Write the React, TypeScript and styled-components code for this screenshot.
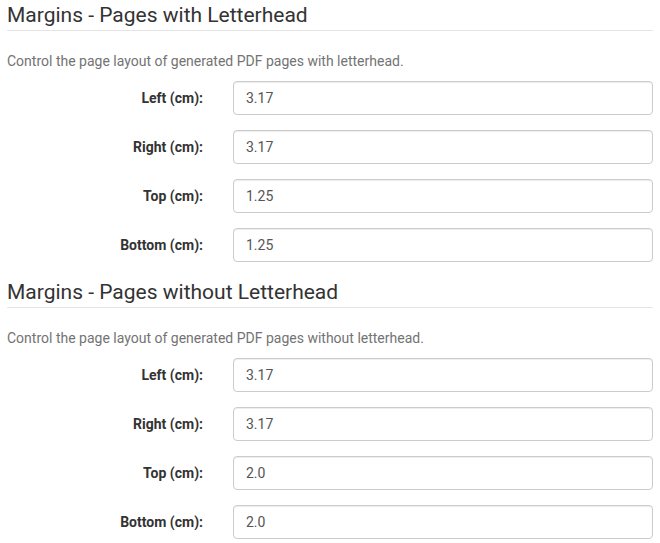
import styled, { createGlobalStyle } from "styled-components";

const GlobalStyle = createGlobalStyle`
  * {
    box-sizing: border-box;
  }

  body {
    margin: 0;
    background: #ffffff;
    font-family: Roboto, "Liberation Sans", sans-serif;
    font-size: 14px;
    line-height: 1.42857;
    color: #333333;
  }
`;

type Field = { label: string; value: string };

type Section = {
  title: string;
  description: string;
  fields: Field[];
};

const SECTIONS: Section[] = [
  {
    title: "Margins - Pages with Letterhead",
    description: "Control the page layout of generated PDF pages with letterhead.",
    fields: [
      { label: "Left (cm):", value: "3.17" },
      { label: "Right (cm):", value: "3.17" },
      { label: "Top (cm):", value: "1.25" },
      { label: "Bottom (cm):", value: "1.25" },
    ],
  },
  {
    title: "Margins - Pages without Letterhead",
    description: "Control the page layout of generated PDF pages without letterhead.",
    fields: [
      { label: "Left (cm):", value: "3.17" },
      { label: "Right (cm):", value: "3.17" },
      { label: "Top (cm):", value: "2.0" },
      { label: "Bottom (cm):", value: "2.0" },
    ],
  },
];

const App = () => {
  return (
    <>
      <GlobalStyle />
      <Page>
        {SECTIONS.map((section) => (
          <Fieldset key={section.title}>
            <Legend>{section.title}</Legend>
            <HelpText>{section.description}</HelpText>
            {section.fields.map((field) => (
              <FormGroup key={field.label}>
                <Label>{field.label}</Label>
                <Input type="text" defaultValue={field.value} />
              </FormGroup>
            ))}
          </Fieldset>
        ))}
      </Page>
    </>
  );
};

const Page = styled.main`
  padding: 0 7px;
  width: 660px;
`;

const Fieldset = styled.fieldset`
  margin: 0;
  padding: 0;
  border: 0;
  min-width: 0;
`;

const Legend = styled.legend`
  display: block;
  width: 100%;
  margin-bottom: 20px;
  padding: 0;

  font-size: 21px;
  font-weight: 400;
  line-height: 30px;
  color: #333333;

  border-bottom: 1px solid #e5e5e5;
`;

const HelpText = styled.p`
  margin: 0 0 10px;
  line-height: 20px;
  color: #737373;
`;

const FormGroup = styled.div`
  display: grid;
  grid-template-columns: 196px 1fr;
  column-gap: 30px;
  margin-bottom: 15px;
`;

const Label = styled.label`
  padding-top: 7px;
  text-align: right;
  font-weight: 700;
  line-height: 20px;
  color: #333333;
`;

const Input = styled.input`
  display: block;
  width: 100%;
  height: 34px;
  padding: 6px 12px;

  font-family: inherit;
  font-size: 14px;
  line-height: 20px;
  color: #555555;

  background: #ffffff;
  border: 1px solid #cccccc;
  border-radius: 4px;
  box-shadow: inset 0 1px 1px rgba(0, 0, 0, 0.075);
  outline: none;
`;

export default App;
